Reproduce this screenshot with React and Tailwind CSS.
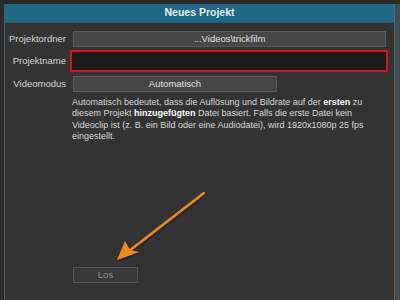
import React from "react";

const Label = ({ children }) => (
    <div className="w-[61px] text-right text-[#d6d6d6] shrink-0">{children}</div>
);

const GrayButton = ({ children, className = "" }) => (
    <div
        className={`h-[16px] bg-[#464646] border border-[#5a5a5a] text-[#e2e2e2] flex items-center justify-center ${className}`}
    >
        {children}
    </div>
);

export default function App() {
    return (
        <div
            className="w-[400px] h-[300px] bg-[#2a2a2a] pt-[4px] pl-[4px] flex overflow-hidden"
            style={{ fontFamily: '"Liberation Sans", Arial, sans-serif' }}
        >
            <div className="relative flex-1 flex flex-col bg-[#333333] border-l border-[#4a5a60] text-[9.5px]">
                {/* Title */}
                <div className="h-[19px] bg-[#1f6987] border-b border-[#2c5566] flex items-center justify-center text-[#e8eef2] font-bold text-[10.5px]">
                    Neues Projekt
                </div>

                <div className="flex flex-col pt-[8px] pr-[8px]">
                    {/* Projektordner */}
                    <div className="flex items-center gap-[7px]">
                        <Label>Projektordner</Label>
                        <GrayButton className="flex-1">...Videos\trickfilm</GrayButton>
                    </div>

                    {/* Projektname */}
                    <div className="flex items-center gap-[4px] mt-[3px]">
                        <Label>Projektname</Label>
                        <div className="flex-1 h-[22px] bg-[#1b1b1b] border-2 border-[#d8141a] -mr-[2px]"></div>
                    </div>

                    {/* Videomodus */}
                    <div className="flex items-center gap-[7px] mt-[4px]">
                        <Label>Videomodus</Label>
                        <GrayButton className="w-[204px]">Automatisch</GrayButton>
                    </div>

                    {/* Beschreibung */}
                    <p className="ml-[67px] mt-[5px] whitespace-nowrap text-[9px] text-[#d8d8d8] leading-[11.3px]">
                        Automatisch bedeutet, dass die Auflösung und Bildrate auf der <b className="text-white">ersten</b> zu
                        <br />
                        diesem Projekt <b className="text-white">hinzugefügten</b> Datei basiert. Falls die erste Datei kein
                        <br />
                        Videoclip ist (z. B. ein Bild oder eine Audiodatei), wird 1920x1080p 25 fps
                        <br />
                        eingestellt.
                    </p>
                </div>

                <div className="flex-1"></div>

                {/* Los */}
                <div className="pl-[68px] pb-[17px]">
                    <div className="w-[65px] h-[16px] bg-[#3a3a3a] border border-[#555555] text-[#8e8e8e] flex items-center justify-center">
                        Los
                    </div>
                </div>

                {/* Pfeil-Markierung */}
                <svg className="absolute left-0 top-0 pointer-events-none" width="390" height="296">
                    <defs>
                        <filter id="s" x="-20%" y="-20%" width="140%" height="140%">
                            <feDropShadow dx="1" dy="1" stdDeviation="1" floodColor="#000" floodOpacity="0.5" />
                        </filter>
                    </defs>
                    <g filter="url(#s)">
                        <line x1="199" y1="189" x2="124" y2="247" stroke="#f08a1c" strokeWidth="2.5" strokeLinecap="round" />
                        <path d="M112 256 L120 237 L125 246 L134 248 Z" fill="#f08a1c" />
                    </g>
                </svg>
            </div>
            <div className="w-[6px] bg-[#3e4d55] border-l border-[#56656c]"></div>
        </div>
    );
}
